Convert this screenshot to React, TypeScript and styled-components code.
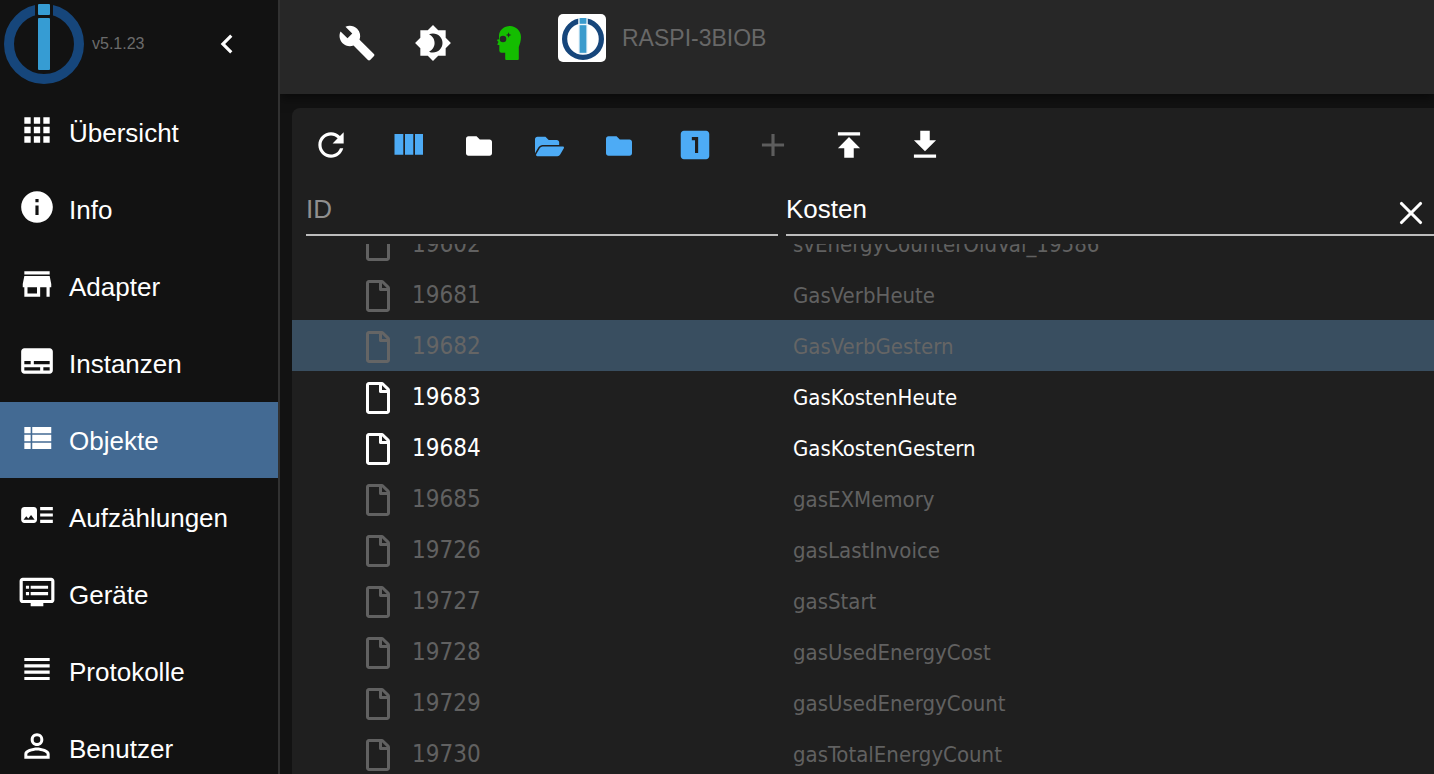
import React from "react";
import styled, { createGlobalStyle } from "styled-components";
import {
  MdAdd,
  MdApps,
  MdArtTrack,
  MdChevronLeft,
  MdGetApp,
  MdInfo,
  MdLooksOne,
  MdOutlineDvr,
  MdPermIdentity,
  MdPublish,
  MdStore,
  MdSubtitles,
  MdViewHeadline,
} from "react-icons/md";
import { FaFolder, FaFolderOpen, FaRegFile } from "react-icons/fa";
import { X } from "lucide-react";

const GlobalStyle = createGlobalStyle`
  * { box-sizing: border-box; }
  body {
    margin: 0;
    background: #121212;
    color: #fff;
    font-family: "Liberation Sans", Arial, sans-serif;
    overflow: hidden;
  }
  button, input { font: inherit; color: inherit; }
`;

const Layout = styled.div`
  display: flex;
  height: 100vh;
`;

const Sidebar = styled.aside`
  position: relative;
  z-index: 1;
  flex: 0 0 280px;
  border-right: 2px solid #313131;
  background: #121212;
  overflow: hidden;
`;

const SidebarHeader = styled.div`
  display: flex;
  align-items: center;
  height: 94px;
  padding: 0 32px 6px 4px;
`;

const Version = styled.span`
  flex: 1;
  padding-left: 8px;
  font-size: 16px;
  color: #6b6b6b;
`;

const PlainButton = styled.button`
  display: flex;
  align-items: center;
  justify-content: center;
  padding: 0;
  border: 0;
  background: none;
  cursor: pointer;
`;

const NavList = styled.nav`
  display: flex;
  flex-direction: column;
  gap: 1px;
`;

const NavItem = styled.a<{ $active?: boolean }>`
  display: flex;
  flex: none;
  align-items: center;
  gap: 13px;
  height: 76px;
  padding: 0 18px;
  font-size: 26px;
  color: #fff;
  text-decoration: none;
  background: ${(p) => (p.$active ? "#436a93" : "transparent")};

  svg { flex: none; margin-bottom: 4px; }
  span { padding-top: 3px; }
`;

const Main = styled.main`
  display: flex;
  flex: 1;
  flex-direction: column;
  min-width: 0;
`;

const AppBar = styled.header`
  display: flex;
  flex: none;
  align-items: center;
  height: 94px;
  padding: 0 39px 8px;
  background: #272727;
  box-shadow: 0 4px 10px rgba(0, 0, 0, 0.5);
`;

const BarButton = styled(PlainButton)`
  width: 76px;
  height: 76px;
`;

const Host = styled.div`
  display: flex;
  align-items: center;
  gap: 16px;
  padding: 0 0 10px 11px;
  font-size: 23px;
  color: #686868;
`;

const HostBadge = styled.span`
  display: flex;
  align-items: center;
  justify-content: center;
  width: 48px;
  height: 48px;
  padding: 2px 0 0 2px;
  border-radius: 5px;
  background: #fff;
`;

const Panel = styled.section`
  display: flex;
  flex: 1;
  flex-direction: column;
  min-height: 0;
  margin: 14px 0 0 12px;
  border-radius: 8px 0 0 0;
  background: #1f1f1f;
`;

const Toolbar = styled.div`
  display: flex;
  flex: none;
  gap: 2px;
  height: 74px;
  padding-left: 1px;
`;

const ToolGroup = styled.div`
  display: flex;
`;

const ToolButton = styled(PlainButton)<{ $tone?: "blue" | "dim" }>`
  width: 76px;
  color: ${(p) => (p.$tone === "blue" ? "#4dabf5" : p.$tone === "dim" ? "#5d5d5d" : "#fff")};
`;

const FolderButton = styled(ToolButton)`
  width: 70px;
  padding: 2px 2px 0 0;
`;

const Filters = styled.div`
  display: grid;
  flex: none;
  grid-template-columns: 472px 1fr;
  gap: 8px;
  height: 54px;
  padding-left: 14px;
`;

const FilterField = styled.div`
  display: flex;
  align-items: center;
  border-bottom: 2px solid #bcbcbc;

  button { margin: 10px 4px 0 0; }
`;

const FilterInput = styled.input`
  flex: 1;
  min-width: 0;
  height: 52px;
  padding: 2px 0 0;
  border: 0;
  outline: 0;
  background: none;
  font-size: 26px;

  &::placeholder { color: #8f8f8f; opacity: 1; }
`;

const Rows = styled.div`
  flex: 1;
  min-height: 0;
  margin-top: 8px;
  overflow: hidden;
`;

const Table = styled.table`
  width: 100%;
  margin-top: -26px;
  border-collapse: collapse;
  table-layout: fixed;
  font-family: "DejaVu Sans Condensed", "Noto Sans", sans-serif;
`;

const IdColumn = styled.col`
  width: 494px;
`;

const Row = styled.tr<{ $match?: boolean; $selected?: boolean }>`
  height: 51px;
  color: ${(p) => (p.$match ? "#fff" : p.$selected ? "#656565" : "#616161")};
  background: ${(p) => (p.$selected ? "#394e60" : "transparent")};

  td { height: 51px; padding: 0; white-space: nowrap; }
`;

const IdCell = styled.div`
  display: flex;
  align-items: center;
  gap: 18px;
  padding-left: 70px;
  font-size: 24px;
  line-height: 48px;

  svg { margin-top: 2px; }
`;

const NameCell = styled.div`
  padding: 3px 0 0 7px;
  font-size: 22px;
  line-height: 48px;
`;

function Logo({ size, light }: { size: number; light?: boolean }) {
  const gap = light ? "#fff" : "#121212";
  const bar = light ? "#3a9bcd" : "#369cd3";
  return (
    <svg width={size} height={size} viewBox="0 0 80 80" aria-hidden="true">
      <circle cx="40" cy="40" r="35" fill="none" stroke="#16467b" strokeWidth="10" />
      <path d="M31 0H49V12Q40 10 31 12Z" fill={gap} />
      {light && <path d="M32 0H48V11H32ZM32 13H48V67H32Z" fill="#b9dcef" />}
      <rect x="34" y="0" width="12" height="11" rx="1" fill={bar} />
      <rect x="34" y="14" width="12" height="52" rx="1" fill={bar} />
    </svg>
  );
}

function ExpertIcon() {
  return (
    <svg width="24" height="34" viewBox="0 0 24 34" fill="#14bd00" aria-hidden="true">
      <path
        fillRule="evenodd"
        d="M13 0C19 0 24 5 24 11c0 4-1.200 7-2.200 10V33q0 1-1 1H9.200q-1 0-1-1V26.800H4.500q-2.200 0-2.200-2.200V19H1.200q-1 0-.7-1l1-2.300Q0 15.200 0 13.800L2 13.300V9C2.500 4 7 0 13 0ZM6 9.700a3.300 3.300 0 1 0 0 6.600a3.300 3.300 0 1 0 0-6.600ZM11.600 6.200l-.8 2-2 .8 2 .8.8 2 .8-2 2-.8-2-.8Z"
      />
    </svg>
  );
}

function PathIcon({ d }: { d: string }) {
  return (
    <svg width="38" height="38" viewBox="0 0 24 24" fill="currentColor" aria-hidden="true">
      <path d={d} />
    </svg>
  );
}

const paths = {
  list: "M4 14h4v-4H4v4zm0 5h4v-4H4v4zM4 9h4V5H4v4zm5 5h12v-4H9v4zm0 5h12v-4H9v4zM9 5v4h12V5H9z",
  wrench:
    "M22.700 19l-9.100-9.100c.9-2.300.4-5-1.500-6.900-2-2-5-2.400-7.400-1.300L9 6 6 9 1.600 4.700C.4 7.100.9 10.100 2.900 12.100c1.900 1.900 4.600 2.400 6.900 1.500l9.100 9.100c.4.4 1 .4 1.400 0l2.300-2.300c.5-.4.5-1.100.1-1.400z",
  brightness:
    "M20 8.690V4h-4.690L12 .69 8.690 4H4v4.690L.69 12 4 15.310V20h4.690L12 23.310 15.310 20H20v-4.690L23.310 12 20 8.690zM12 18c-.89 0-1.740-.2-2.500-.55C11.560 16.500 13 14.420 13 12s-1.440-4.500-3.500-5.450C10.260 6.200 11.110 6 12 6c3.310 0 6 2.690 6 6s-2.690 6-6 6z",
  refresh:
    "M17.650 6.350C16.200 4.900 14.210 4 12 4c-4.420 0-7.990 3.580-7.990 8s3.570 8 7.990 8c3.730 0 6.840-2.550 7.730-6h-2.080c-.82 2.330-3.040 4-5.650 4-3.310 0-6-2.690-6-6s2.690-6 6-6c1.660 0 3.140.69 4.220 1.780L13 11h7V4l-2.350 2.350z",
};

function ColumnsIcon() {
  return (
    <svg width="38" height="38" viewBox="0 0 38 38" fill="currentColor" aria-hidden="true">
      <path d="M6.500 8H15.300V28.700H6.500ZM17 8H25.300V28.700H17ZM27 8H35V28.700H27Z" />
    </svg>
  );
}

const navItems = [
  { label: "Übersicht", icon: <MdApps size={38} /> },
  { label: "Info", icon: <MdInfo size={38} /> },
  { label: "Adapter", icon: <MdStore size={38} /> },
  { label: "Instanzen", icon: <MdSubtitles size={38} /> },
  { label: "Objekte", icon: <PathIcon d={paths.list} />, active: true },
  { label: "Aufzählungen", icon: <MdArtTrack size={38} /> },
  { label: "Geräte", icon: <MdOutlineDvr size={38} /> },
  { label: "Protokolle", icon: <MdViewHeadline size={38} /> },
  { label: "Benutzer", icon: <MdPermIdentity size={38} /> },
];

const objects = [
  { id: "19602", name: "svEnergyCounterOldVal_19586" },
  { id: "19681", name: "GasVerbHeute" },
  { id: "19682", name: "GasVerbGestern", selected: true },
  { id: "19683", name: "GasKostenHeute", match: true },
  { id: "19684", name: "GasKostenGestern", match: true },
  { id: "19685", name: "gasEXMemory" },
  { id: "19726", name: "gasLastInvoice" },
  { id: "19727", name: "gasStart" },
  { id: "19728", name: "gasUsedEnergyCost" },
  { id: "19729", name: "gasUsedEnergyCount" },
  { id: "19730", name: "gasTotalEnergyCount" },
];

export default function App() {
  return (
    <Layout>
      <GlobalStyle />
      <Sidebar>
        <SidebarHeader>
          <Logo size={80} />
          <Version>v5.1.23</Version>
          <PlainButton aria-label="Menü einklappen">
            <MdChevronLeft size={38} />
          </PlainButton>
        </SidebarHeader>
        <NavList>
          {navItems.map((item) => (
            <NavItem key={item.label} href="#" $active={item.active}>
              {item.icon}
              <span>{item.label}</span>
            </NavItem>
          ))}
        </NavList>
      </Sidebar>
      <Main>
        <AppBar>
          <BarButton aria-label="Einstellungen"><PathIcon d={paths.wrench} /></BarButton>
          <BarButton aria-label="Farbschema"><PathIcon d={paths.brightness} /></BarButton>
          <BarButton aria-label="Expertenmodus"><ExpertIcon /></BarButton>
          <Host>
            <HostBadge><Logo size={42} light /></HostBadge>
            RASPI-3BIOB
          </Host>
        </AppBar>
        <Panel>
          <Toolbar>
            <ToolGroup>
              <ToolButton aria-label="Aktualisieren"><PathIcon d={paths.refresh} /></ToolButton>
              <ToolButton aria-label="Spalten" $tone="blue"><ColumnsIcon /></ToolButton>
              <FolderButton aria-label="Alle zuklappen"><FaFolder size={26} /></FolderButton>
              <FolderButton aria-label="Alle aufklappen" $tone="blue"><FaFolderOpen size={29} /></FolderButton>
              <FolderButton aria-label="Eine Ebene zuklappen" $tone="blue"><FaFolder size={26} /></FolderButton>
            </ToolGroup>
            <ToolGroup>
              <ToolButton aria-label="Zustände" $tone="blue"><MdLooksOne size={38} /></ToolButton>
            </ToolGroup>
            <ToolGroup>
              <ToolButton aria-label="Hinzufügen" $tone="dim"><MdAdd size={38} /></ToolButton>
              <ToolButton aria-label="Hochladen"><MdPublish size={38} /></ToolButton>
              <ToolButton aria-label="Herunterladen"><MdGetApp size={38} /></ToolButton>
            </ToolGroup>
          </Toolbar>
          <Filters>
            <FilterField>
              <FilterInput aria-label="ID" placeholder="ID" />
            </FilterField>
            <FilterField>
              <FilterInput aria-label="Name" defaultValue="Kosten" />
              <PlainButton aria-label="Filter löschen"><X size={38} strokeWidth={2} /></PlainButton>
            </FilterField>
          </Filters>
          <Rows>
            <Table>
              <colgroup>
                <IdColumn />
                <col />
              </colgroup>
              <tbody>
                {objects.map((o) => (
                  <Row key={o.id} $match={o.match} $selected={o.selected}>
                    <td>
                      <IdCell>
                        <FaRegFile size={32} />
                        {o.id}
                      </IdCell>
                    </td>
                    <td>
                      <NameCell>{o.name}</NameCell>
                    </td>
                  </Row>
                ))}
              </tbody>
            </Table>
          </Rows>
        </Panel>
      </Main>
    </Layout>
  );
}
